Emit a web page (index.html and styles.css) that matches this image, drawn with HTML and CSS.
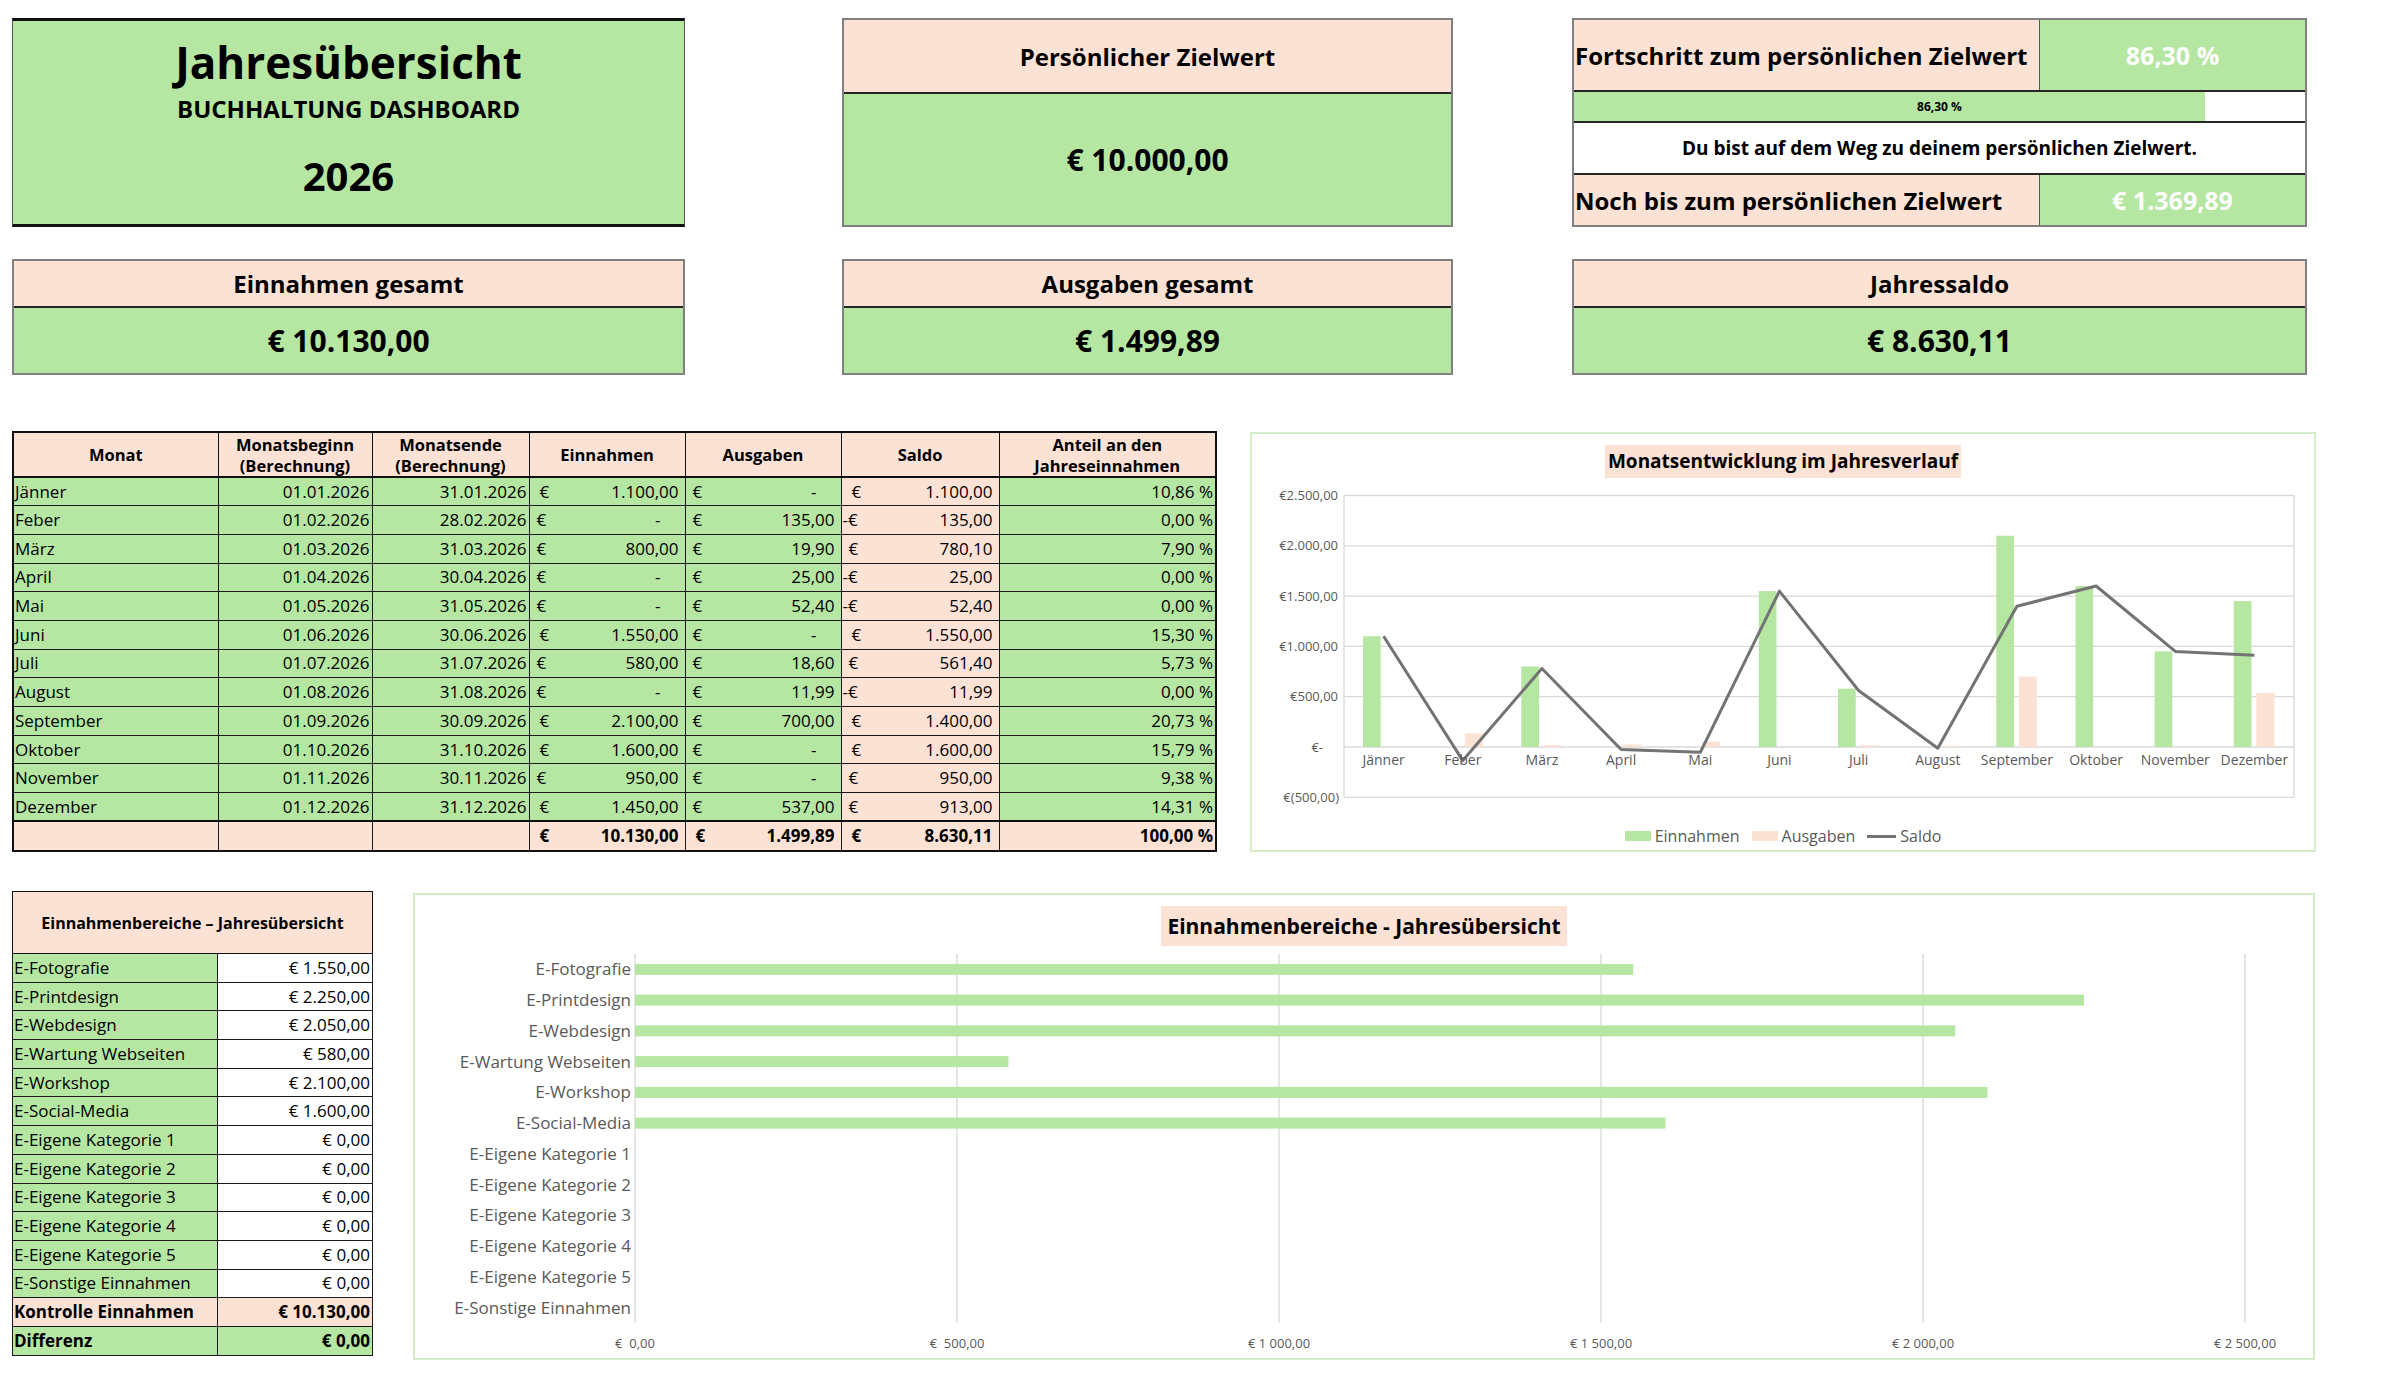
FILE: index.html
```html
<!DOCTYPE html>
<html lang="de">
<head>
<meta charset="utf-8">
<title>Jahresübersicht – Buchhaltung Dashboard</title>
<link rel="stylesheet" href="styles.css">
</head>
<body>
<div class="dash">
  <div class="row row1">
    <div class="titlebox col1">
      <h1>Jahresübersicht</h1>
      <div class="sub">BUCHHALTUNG DASHBOARD</div>
      <div class="year">2026</div>
    </div>
    <div class="card card-tall col2">
      <div class="card-head">Persönlicher Zielwert</div>
      <div class="card-val">€ 10.000,00</div>
    </div>
    <div class="progress col3">
      <div class="p-row p-first">
        <div class="p-label">Fortschritt zum persönlichen Zielwert</div>
        <div class="p-val">86,30 %</div>
      </div>
      <div class="p-bar">
        <div class="p-track"><div class="p-fill" style="width:86.3%"></div></div>
        <div class="p-bartext">86,30 %</div>
      </div>
      <div class="p-msg">Du bist auf dem Weg zu deinem persönlichen Zielwert.</div>
      <div class="p-row p-last">
        <div class="p-label">Noch bis zum persönlichen Zielwert</div>
        <div class="p-val">€ 1.369,89</div>
      </div>
    </div>
  </div>

  <div class="row row2">
    <div class="card card-short col1">
      <div class="card-head">Einnahmen gesamt</div>
      <div class="card-val">€ 10.130,00</div>
    </div>
    <div class="card card-short col2">
      <div class="card-head">Ausgaben gesamt</div>
      <div class="card-val">€ 1.499,89</div>
    </div>
    <div class="card card-short col3">
      <div class="card-head">Jahressaldo</div>
      <div class="card-val">€ 8.630,11</div>
    </div>
  </div>

  <div class="row row3">
    <table class="months">
      <colgroup>
        <col class="w-monat"><col class="w-date"><col class="w-date2"><col class="w-money"><col class="w-money"><col class="w-saldo"><col class="w-anteil">
      </colgroup>
      <thead>
        <tr><th>Monat</th><th>Monatsbeginn<br>(Berechnung)</th><th>Monatsende<br>(Berechnung)</th><th>Einnahmen</th><th>Ausgaben</th><th>Saldo</th><th>Anteil an den<br>Jahreseinnahmen</th></tr>
      </thead>
      <tbody>
        <tr><td class="t-left">Jänner</td><td class="t-right">01.01.2026</td><td class="t-right">31.01.2026</td><td><div class="acc i"><span>€</span><span>1.100,00</span></div></td><td><div class="acc"><span>€</span><span class="dash-v">-</span></div></td><td class="pink"><div class="acc i"><span>€</span><span>1.100,00</span></div></td><td class="t-right">10,86 %</td></tr>
        <tr><td class="t-left">Feber</td><td class="t-right">01.02.2026</td><td class="t-right">28.02.2026</td><td><div class="acc"><span>€</span><span class="dash-v">-</span></div></td><td><div class="acc"><span>€</span><span>135,00</span></div></td><td class="pink"><div class="acc neg"><span>-€</span><span>135,00</span></div></td><td class="t-right">0,00 %</td></tr>
        <tr><td class="t-left">März</td><td class="t-right">01.03.2026</td><td class="t-right">31.03.2026</td><td><div class="acc"><span>€</span><span>800,00</span></div></td><td><div class="acc"><span>€</span><span>19,90</span></div></td><td class="pink"><div class="acc"><span>€</span><span>780,10</span></div></td><td class="t-right">7,90 %</td></tr>
        <tr><td class="t-left">April</td><td class="t-right">01.04.2026</td><td class="t-right">30.04.2026</td><td><div class="acc"><span>€</span><span class="dash-v">-</span></div></td><td><div class="acc"><span>€</span><span>25,00</span></div></td><td class="pink"><div class="acc neg"><span>-€</span><span>25,00</span></div></td><td class="t-right">0,00 %</td></tr>
        <tr><td class="t-left">Mai</td><td class="t-right">01.05.2026</td><td class="t-right">31.05.2026</td><td><div class="acc"><span>€</span><span class="dash-v">-</span></div></td><td><div class="acc"><span>€</span><span>52,40</span></div></td><td class="pink"><div class="acc neg"><span>-€</span><span>52,40</span></div></td><td class="t-right">0,00 %</td></tr>
        <tr><td class="t-left">Juni</td><td class="t-right">01.06.2026</td><td class="t-right">30.06.2026</td><td><div class="acc i"><span>€</span><span>1.550,00</span></div></td><td><div class="acc"><span>€</span><span class="dash-v">-</span></div></td><td class="pink"><div class="acc i"><span>€</span><span>1.550,00</span></div></td><td class="t-right">15,30 %</td></tr>
        <tr><td class="t-left">Juli</td><td class="t-right">01.07.2026</td><td class="t-right">31.07.2026</td><td><div class="acc"><span>€</span><span>580,00</span></div></td><td><div class="acc"><span>€</span><span>18,60</span></div></td><td class="pink"><div class="acc"><span>€</span><span>561,40</span></div></td><td class="t-right">5,73 %</td></tr>
        <tr><td class="t-left">August</td><td class="t-right">01.08.2026</td><td class="t-right">31.08.2026</td><td><div class="acc"><span>€</span><span class="dash-v">-</span></div></td><td><div class="acc"><span>€</span><span>11,99</span></div></td><td class="pink"><div class="acc neg"><span>-€</span><span>11,99</span></div></td><td class="t-right">0,00 %</td></tr>
        <tr><td class="t-left">September</td><td class="t-right">01.09.2026</td><td class="t-right">30.09.2026</td><td><div class="acc i"><span>€</span><span>2.100,00</span></div></td><td><div class="acc"><span>€</span><span>700,00</span></div></td><td class="pink"><div class="acc i"><span>€</span><span>1.400,00</span></div></td><td class="t-right">20,73 %</td></tr>
        <tr><td class="t-left">Oktober</td><td class="t-right">01.10.2026</td><td class="t-right">31.10.2026</td><td><div class="acc i"><span>€</span><span>1.600,00</span></div></td><td><div class="acc"><span>€</span><span class="dash-v">-</span></div></td><td class="pink"><div class="acc i"><span>€</span><span>1.600,00</span></div></td><td class="t-right">15,79 %</td></tr>
        <tr><td class="t-left">November</td><td class="t-right">01.11.2026</td><td class="t-right">30.11.2026</td><td><div class="acc"><span>€</span><span>950,00</span></div></td><td><div class="acc"><span>€</span><span class="dash-v">-</span></div></td><td class="pink"><div class="acc"><span>€</span><span>950,00</span></div></td><td class="t-right">9,38 %</td></tr>
        <tr><td class="t-left">Dezember</td><td class="t-right">01.12.2026</td><td class="t-right">31.12.2026</td><td><div class="acc i"><span>€</span><span>1.450,00</span></div></td><td><div class="acc"><span>€</span><span>537,00</span></div></td><td class="pink"><div class="acc"><span>€</span><span>913,00</span></div></td><td class="t-right">14,31 %</td></tr>
      </tbody>
      <tfoot>
        <tr><td></td><td></td><td></td><td><div class="acc i"><span>€</span><span>10.130,00</span></div></td><td><div class="acc i"><span>€</span><span>1.499,89</span></div></td><td><div class="acc i"><span>€</span><span>8.630,11</span></div></td><td class="t-right">100,00 %</td></tr>
      </tfoot>
    </table>

    <div class="chart chart-line">
      <div class="chart-title">Monatsentwicklung im Jahresverlauf</div>
      <svg class="plot" width="1062" height="344" viewBox="0 0 1062 344">
        <g class="grid">
          <line x1="92" y1="17.5" x2="1042" y2="17.5"/>
          <line x1="92" y1="67.8" x2="1042" y2="67.8"/>
          <line x1="92" y1="118.1" x2="1042" y2="118.1"/>
          <line x1="92" y1="168.4" x2="1042" y2="168.4"/>
          <line x1="92" y1="218.7" x2="1042" y2="218.7"/>
          <line x1="92" y1="269" x2="1042" y2="269"/>
          <line x1="92" y1="319.3" x2="1042" y2="319.3"/>
          <line x1="92" y1="17.5" x2="92" y2="319.3"/>
          <line x1="1042" y1="17.5" x2="1042" y2="319.3"/>
        </g>
        <g class="ylab">
          <text x="86" y="22">€2.500,00</text>
          <text x="86" y="72.3">€2.000,00</text>
          <text x="86" y="122.6">€1.500,00</text>
          <text x="86" y="172.9">€1.000,00</text>
          <text x="86" y="223.2">€500,00</text>
          <text x="71" y="273.5">€-</text>
          <text x="87" y="323.8">€(500,00)</text>
        </g>
        <g class="bar-in">
          <rect x="111" y="158.3" width="17.7" height="110.7"/>
          <rect x="269.3" y="188.5" width="17.7" height="80.5"/>
          <rect x="506.8" y="113.1" width="17.7" height="155.9"/>
          <rect x="586" y="210.6" width="17.7" height="58.4"/>
          <rect x="744.3" y="57.7" width="17.7" height="211.3"/>
          <rect x="823.5" y="108" width="17.7" height="161"/>
          <rect x="902.6" y="173.4" width="17.7" height="95.6"/>
          <rect x="981.8" y="123.1" width="17.7" height="145.9"/>
        </g>
        <g class="bar-out">
          <rect x="212.8" y="255.4" width="18" height="13.6"/>
          <rect x="291.9" y="267" width="18" height="2"/>
          <rect x="371.1" y="266.5" width="18" height="2.5"/>
          <rect x="450.3" y="263.7" width="18" height="5.3"/>
          <rect x="608.6" y="267.1" width="18" height="1.9"/>
          <rect x="687.8" y="267.8" width="18" height="1.2"/>
          <rect x="766.9" y="198.6" width="18" height="70.4"/>
          <rect x="1004.4" y="215" width="18" height="54"/>
        </g>
        <polyline class="saldo" points="131.6,158.3 210.8,282.6 289.9,190.5 369.1,271.5 448.3,274.3 527.4,113.1 606.6,212.5 685.8,270.2 764.9,128.2 844.1,108 923.3,173.4 1002.4,177.2"/>
        <g class="xlab">
          <text x="131.6" y="287">Jänner</text>
          <text x="210.8" y="287">Feber</text>
          <text x="289.9" y="287">März</text>
          <text x="369.1" y="287">April</text>
          <text x="448.3" y="287">Mai</text>
          <text x="527.4" y="287">Juni</text>
          <text x="606.6" y="287">Juli</text>
          <text x="685.8" y="287">August</text>
          <text x="764.9" y="287">September</text>
          <text x="844.1" y="287">Oktober</text>
          <text x="923.3" y="287">November</text>
          <text x="1002.4" y="287">Dezember</text>
        </g>
      </svg>
      <div class="legend">
        <div class="lg"><span class="sw sw-in"></span>Einnahmen</div>
        <div class="lg"><span class="sw sw-out"></span>Ausgaben</div>
        <div class="lg"><span class="sw-line"></span>Saldo</div>
      </div>
    </div>
  </div>

  <div class="row row4">
    <table class="cats">
      <colgroup><col class="w-cat"><col class="w-catval"></colgroup>
      <thead>
        <tr><th colspan="2">Einnahmenbereiche – Jahresübersicht</th></tr>
      </thead>
      <tbody>
        <tr><td class="c-label">E-Fotografie</td><td class="c-val">€ 1.550,00</td></tr>
        <tr><td class="c-label">E-Printdesign</td><td class="c-val">€ 2.250,00</td></tr>
        <tr><td class="c-label">E-Webdesign</td><td class="c-val">€ 2.050,00</td></tr>
        <tr><td class="c-label">E-Wartung Webseiten</td><td class="c-val">€ 580,00</td></tr>
        <tr><td class="c-label">E-Workshop</td><td class="c-val">€ 2.100,00</td></tr>
        <tr><td class="c-label">E-Social-Media</td><td class="c-val">€ 1.600,00</td></tr>
        <tr><td class="c-label">E-Eigene Kategorie 1</td><td class="c-val">€ 0,00</td></tr>
        <tr><td class="c-label">E-Eigene Kategorie 2</td><td class="c-val">€ 0,00</td></tr>
        <tr><td class="c-label">E-Eigene Kategorie 3</td><td class="c-val">€ 0,00</td></tr>
        <tr><td class="c-label">E-Eigene Kategorie 4</td><td class="c-val">€ 0,00</td></tr>
        <tr><td class="c-label">E-Eigene Kategorie 5</td><td class="c-val">€ 0,00</td></tr>
        <tr><td class="c-label">E-Sonstige Einnahmen</td><td class="c-val">€ 0,00</td></tr>
        <tr class="kontrolle"><td class="c-label">Kontrolle Einnahmen</td><td class="c-val">€ 10.130,00</td></tr>
        <tr class="differenz"><td class="c-label">Differenz</td><td class="c-val">€ 0,00</td></tr>
      </tbody>
    </table>

    <div class="chart chart-bar">
      <div class="chart-title big">Einnahmenbereiche - Jahresübersicht</div>
      <svg class="plot" width="1898" height="412" viewBox="0 0 1898 412">
        <g class="grid">
          <line x1="220" y1="8" x2="220" y2="377"/>
          <line x1="542" y1="8" x2="542" y2="377"/>
          <line x1="864" y1="8" x2="864" y2="377"/>
          <line x1="1186" y1="8" x2="1186" y2="377"/>
          <line x1="1508" y1="8" x2="1508" y2="377"/>
          <line x1="1830" y1="8" x2="1830" y2="377"/>
        </g>
        <g class="bar-in">
          <rect x="220" y="17.9" width="998.2" height="11"/>
          <rect x="220" y="48.6" width="1449" height="11"/>
          <rect x="220" y="79.4" width="1320.2" height="11"/>
          <rect x="220" y="110.1" width="373.5" height="11"/>
          <rect x="220" y="140.9" width="1352.4" height="11"/>
          <rect x="220" y="171.6" width="1030.4" height="11"/>
        </g>
        <g class="catlab">
          <text x="216" y="29.4">E-Fotografie</text>
          <text x="216" y="60.1">E-Printdesign</text>
          <text x="216" y="90.9">E-Webdesign</text>
          <text x="216" y="121.6">E-Wartung Webseiten</text>
          <text x="216" y="152.4">E-Workshop</text>
          <text x="216" y="183.1">E-Social-Media</text>
          <text x="216" y="213.9">E-Eigene Kategorie 1</text>
          <text x="216" y="244.6">E-Eigene Kategorie 2</text>
          <text x="216" y="275.4">E-Eigene Kategorie 3</text>
          <text x="216" y="306.1">E-Eigene Kategorie 4</text>
          <text x="216" y="336.9">E-Eigene Kategorie 5</text>
          <text x="216" y="367.6">E-Sonstige Einnahmen</text>
        </g>
        <g class="vlab">
          <text x="220" y="401.5">€  0,00</text>
          <text x="542" y="401.5">€  500,00</text>
          <text x="864" y="401.5">€ 1 000,00</text>
          <text x="1186" y="401.5">€ 1 500,00</text>
          <text x="1508" y="401.5">€ 2 000,00</text>
          <text x="1830" y="401.5">€ 2 500,00</text>
        </g>
      </svg>
    </div>
  </div>
</div>
</body>
</html>
```

FILE: styles.css
```css
* { box-sizing: border-box; margin: 0; padding: 0; }
html, body { background: #ffffff; }
body {
  font-family: "Open Sans", "Noto Sans", "DejaVu Sans", sans-serif;
  color: #000;
  width: 2400px;
  height: 1387px;
  overflow: hidden;
}

.dash { padding: 18px 0 0 12px; }
.row { display: flex; align-items: flex-start; }
.row1 { height: 209px; }
.row2 { margin-top: 32px; height: 116px; }
.row3 { margin-top: 56px; height: 421px; }
.row4 { margin-top: 39px; }

.col1 { width: 673px; }
.col2 { width: 611px; margin-left: 157px; }
.col3 { width: 735px; margin-left: 119px; }

/* Title box */
.titlebox {
  height: 209px;
  background: #b5e6a2;
  border: 1px solid #555;
  border-top: 3px solid #111;
  border-bottom: 3px solid #111;
  text-align: center;
  padding-top: 11px;
}
.titlebox h1 { font-size: 44px; font-weight: 700; line-height: 60px; }
.titlebox .sub { font-size: 24px; font-weight: 700; line-height: 31px; margin-top: 1px; }
.titlebox .year { font-size: 40px; font-weight: 700; line-height: 54px; margin-top: 25px; }

/* KPI cards */
.card {
  display: flex;
  flex-direction: column;
  border: 2px solid #808080;
}
.card-tall { height: 209px; }
.card-short { height: 116px; }
.card-head {
  background: #fbe2d5;
  border-bottom: 2px solid #262626;
  display: flex;
  align-items: center;
  justify-content: center;
  font-size: 24px;
  font-weight: 700;
}
.card-tall .card-head { height: 74px; }
.card-short .card-head { height: 47px; }
.card-val {
  flex: 1;
  background: #b5e6a2;
  display: flex;
  align-items: center;
  justify-content: center;
  font-size: 30px;
  font-weight: 700;
}

/* Progress box */
.progress {
  height: 209px;
  border: 2px solid #808080;
  display: grid;
  grid-template-rows: 72px 31px 52px 1fr;
}
.p-row { display: grid; grid-template-columns: 465px 1fr; }
.p-first, .p-bar, .p-msg { border-bottom: 2px solid #262626; }
.p-label {
  background: #fbe2d5;
  display: flex;
  align-items: center;
  padding-left: 1px;
  font-size: 24px;
  font-weight: 700;
  white-space: nowrap;
}
.p-val {
  background: #b5e6a2;
  border-left: 1px solid #555;
  display: flex;
  align-items: center;
  justify-content: center;
  color: #ffffff;
  font-size: 25px;
  font-weight: 700;
}
.p-bar { display: grid; background: #fff; }
.p-track, .p-bartext { grid-area: 1 / 1; }
.p-track { display: flex; }
.p-fill { background: #b5e6a2; height: 100%; }
.p-bartext {
  display: flex;
  align-items: center;
  justify-content: center;
  font-size: 12px;
  font-weight: 700;
}
.p-msg {
  background: #fff;
  display: flex;
  align-items: center;
  justify-content: center;
  font-size: 19px;
  font-weight: 700;
}

/* Monthly table */
.months {
  width: 1203px;
  border-collapse: collapse;
  table-layout: fixed;
  border: 2px solid #111;
  font-size: 17px;
}
.w-monat { width: 205px; }
.w-date { width: 154px; }
.w-date2 { width: 157px; }
.w-money { width: 156px; }
.w-saldo { width: 158px; }
.w-anteil { width: 217px; }
.months th {
  background: #fbe2d5;
  font-weight: 700;
  font-size: 16.5px;
  line-height: 21px;
  height: 45px;
  border: 1px solid #111;
  border-bottom: 2px solid #111;
  text-align: center;
}
.months td {
  background: #b5e6a2;
  height: 28.7px;
  border: 1px solid #1a1a1a;
  padding: 0;
  white-space: nowrap;
  line-height: 22px;
}
.months td.pink { background: #fbe2d5; }
.months .t-left { padding-left: 1px; }
.months .t-right { text-align: right; padding-right: 2px; }
.acc {
  display: flex;
  justify-content: space-between;
  padding: 0 6px 0 7px;
}
.acc.i { padding-left: 10px; }
.acc.neg { padding-left: 1px; }
.dash-v { padding-right: 18px; }
.months tfoot td {
  background: #fbe2d5;
  font-weight: 700;
  height: 30px;
  border-top: 2px solid #111;
}

/* Charts */
.chart {
  border: 2px solid #d2ecc6;
  display: flex;
  flex-direction: column;
  align-items: center;
  background: #fff;
}
.chart-line { width: 1066px; height: 420px; margin-left: 33px; margin-top: 1px; }
.chart-bar { width: 1902px; height: 467px; margin-left: 40px; margin-top: 2px; }
.chart-title {
  background: #fbe2d5;
  font-weight: 700;
  font-size: 19px;
  line-height: 33px;
  padding: 0 3px;
  margin-top: 11px;
  white-space: nowrap;
}
.chart-title.big { font-size: 21px; line-height: 40px; padding: 0 6px; }
.plot { display: block; }
.plot text { font-family: "Open Sans", "Noto Sans", sans-serif; fill: #595959; }
.grid line { stroke: #d9d9d9; stroke-width: 1.3; }
.bar-in rect { fill: #b5e6a2; }
.bar-out rect { fill: #fbe2d5; }
.saldo { fill: none; stroke: #737373; stroke-width: 3; stroke-linejoin: round; }
.ylab text { text-anchor: end; font-size: 13px; }
.xlab text { text-anchor: middle; font-size: 14px; }
.catlab text { text-anchor: end; font-size: 17px; }
.vlab text { text-anchor: middle; font-size: 13px; white-space: pre; }

.legend {
  height: 28px;
  display: flex;
  align-items: center;
  justify-content: center;
  gap: 12px;
  font-size: 16px;
  color: #595959;
}
.lg { display: flex; align-items: center; gap: 4px; }
.sw { display: block; width: 26px; height: 10px; }
.sw-in { background: #b5e6a2; }
.sw-out { background: #fbe2d5; }
.sw-line { display: block; width: 29px; height: 3px; background: #737373; }

/* Category table */
.cats {
  width: 360px;
  border-collapse: collapse;
  table-layout: fixed;
  border: 1.5px solid #333;
  font-size: 17px;
}
.w-cat { width: 205px; }
.w-catval { width: 155px; }
.cats th {
  background: #fbe2d5;
  font-size: 16px;
  font-weight: 700;
  height: 62px;
  border: 1px solid #111;
  text-align: center;
}
.cats td {
  height: 28.7px;
  border: 1px solid #1a1a1a;
  line-height: 22px;
  white-space: nowrap;
}
.c-label { background: #b5e6a2; padding-left: 1px; }
.c-val { background: #fff; text-align: right; padding-right: 2px; }
.kontrolle td { background: #fbe2d5; font-weight: 700; }
.differenz td { background: #b5e6a2; font-weight: 700; }
```
